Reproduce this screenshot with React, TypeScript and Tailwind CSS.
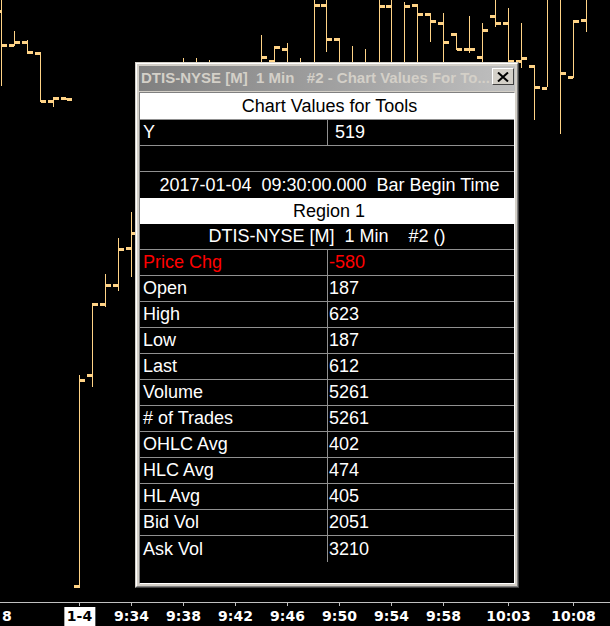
import React from 'react';

type Bar = { x: number; hi: number; lo: number; o?: number; c?: number };

// price bars (pixel coords on the chart canvas)
const bars: Bar[] = [
  { x: 1, hi: -5, lo: 86, o: 11, c: 45 },
  { x: 14, hi: 31, lo: 46, o: 45, c: 42 },
  { x: 27, hi: 40, lo: 54, o: 42, c: 52 },
  { x: 40, hi: 52, lo: 102, o: 53, c: 101 },
  { x: 53, hi: 97, lo: 107, o: 101, c: 98 },
  { x: 66, hi: 98, lo: 100, o: 98, c: 99 },
  { x: 79, hi: 375, lo: 588, o: 586, c: 380 },
  { x: 92, hi: 303, lo: 387, o: 375, c: 304 },
  { x: 105, hi: 274, lo: 307, o: 304, c: 285 },
  { x: 118, hi: 238, lo: 291, o: 285, c: 249 },
  { x: 131, hi: 212, lo: 277, o: 248, c: 233 },
  { x: 183, hi: 58, lo: 200 },
  { x: 196, hi: 58, lo: 200 },
  { x: 209, hi: 60, lo: 200 },
  { x: 261, hi: 35, lo: 200, c: 57 },
  { x: 274, hi: 46, lo: 200, o: 61, c: 47 },
  { x: 287, hi: 43, lo: 200, o: 49 },
  { x: 300, hi: 58, lo: 200 },
  { x: 314, hi: -5, lo: 200, c: 5 },
  { x: 326, hi: -5, lo: 52, o: 5, c: 39 },
  { x: 339, hi: 38, lo: 200, o: 39 },
  { x: 352, hi: 46, lo: 200 },
  { x: 365, hi: 49, lo: 200 },
  { x: 379, hi: -5, lo: 200, c: 6 },
  { x: 391, hi: -5, lo: 200, o: 6 },
  { x: 404, hi: 2, lo: 200, c: 6 },
  { x: 417, hi: 4, lo: 200, o: 5, c: 14 },
  { x: 430, hi: 13, lo: 42, o: 14, c: 21 },
  { x: 443, hi: 13, lo: 200, o: 23, c: 42 },
  { x: 456, hi: 33, lo: 50, o: 34, c: 49 },
  { x: 469, hi: 16, lo: 53, o: 49, c: 49 },
  { x: 482, hi: 23, lo: 200, o: 57, c: 30 },
  { x: 495, hi: -5, lo: 27, o: 16, c: 23 },
  { x: 508, hi: 8, lo: 200, o: 23, c: 61 },
  { x: 521, hi: 23, lo: 68, o: 61, c: 58 },
  { x: 534, hi: 65, lo: 120, o: 66, c: 87 },
  { x: 547, hi: -5, lo: 87, o: 88 },
  { x: 560, hi: -5, lo: 134, c: 73 },
  { x: 573, hi: 20, lo: 78, o: 77, c: 21 },
  { x: 586, hi: -5, lo: 32, o: 20 },
];

const ticks = [
  { x: 79, t: '1-4', day: true },
  { x: 131, t: '9:34' },
  { x: 183, t: '9:38' },
  { x: 235, t: '9:42' },
  { x: 287, t: '9:46' },
  { x: 339, t: '9:50' },
  { x: 391, t: '9:54' },
  { x: 443, t: '9:58' },
  { x: 508, t: '10:03' },
  { x: 573, t: '10:08' },
];

const values: [string, string, boolean?][] = [
  ['Price Chg', '-580', true],
  ['Open', '187'],
  ['High', '623'],
  ['Low', '187'],
  ['Last', '612'],
  ['Volume', '5261'],
  ['# of Trades', '5261'],
  ['OHLC Avg', '402'],
  ['HLC Avg', '474'],
  ['HL Avg', '405'],
  ['Bid Vol', '2051'],
  ['Ask Vol', '3210'],
];

const BAR = '#ffd386';

const Chart = () => (
  <svg className="absolute inset-0" width={610} height={602}>
    {bars.map((b) => (
      <g key={b.x} fill={BAR}>
        <rect x={b.x} y={b.hi} width={1} height={b.lo - b.hi} />
        {b.o !== undefined && <rect x={b.x - 5} y={b.o - 1} width={5} height={3} />}
        {b.c !== undefined && <rect x={b.x + 1} y={b.c - 1} width={5} height={3} />}
      </g>
    ))}
  </svg>
);

const Row = ({ label, value, red, last, wide }: { label: string; value: string; red?: boolean; last?: boolean; wide?: boolean }) => (
  <div className={`flex h-[26px] ${last ? '' : 'border-b border-[#909090]'} ${red ? 'text-[#ff0000]' : 'text-white'}`}>
    <div className="w-[188px] border-r border-[#909090] pl-[3px] flex items-center">{label}</div>
    <div className={`flex-1 flex items-center ${wide ? 'pl-[7px]' : 'pl-[1px]'}`}>{value}</div>
  </div>
);

const ValuesWindow = () => (
  <div className="absolute left-[135px] top-[62px] w-[384px] h-[526px] border border-t-[#d4d0c8] border-l-[#d4d0c8] border-r-[#404040] border-b-[#404040] bg-[#d4d0c8]">
    <div className="h-full flex flex-col border border-t-white border-l-white border-r-[#808080] border-b-[#808080] p-[2px]">
      {/* title bar */}
      <div className="h-[25px] flex items-start bg-gradient-to-r from-[#808080] to-[#c0c0c0]">
        <div className="flex-1 h-full flex items-center pl-[2px] text-[15px] font-bold text-[#d4d0c8] whitespace-pre font-['Liberation_Sans',Arial,sans-serif] overflow-hidden">
          DTIS-NYSE [M]  1 Min   #2 - Chart Values For To...
        </div>
        <div className="mt-[2px] mr-[1px] w-[22px] h-[17px] bg-[#d4d0c8] border border-t-white border-l-white border-r-[#404040] border-b-[#404040] flex items-center justify-center">
          <svg width="12" height="10" viewBox="0 0 12 10">
            <path d="M1 0.5 L11 9.5 M11 0.5 L1 9.5" stroke="#000" strokeWidth="2" />
          </svg>
        </div>
      </div>

      {/* values table */}
      <div className="mt-[1px] flex-1 flex flex-col bg-black border border-t-[#808080] border-l-[#808080] border-r-white border-b-white text-[18px] font-['Liberation_Sans',Arial,sans-serif] whitespace-pre">
        <div className="h-[27px] bg-white text-black flex items-center justify-center border-b border-[#909090] pl-[5px]">
          Chart Values for Tools
        </div>
        <Row label="Y" value="519" wide />
        <div className="h-[26px] border-b border-[#909090]" />
        <div className="h-[26px] text-white flex items-center justify-center pl-[5px]">
          2017-01-04  09:30:00.000  Bar Begin Time
        </div>
        <div className="h-[26px] bg-white text-black flex items-center justify-center pl-[4px]">Region 1</div>
        <div className="h-[26px] text-white flex items-center justify-center border-b border-[#909090]">
          DTIS-NYSE [M]  1 Min    #2 ()
        </div>
        {values.map(([l, v, red], i) => (
          <Row key={l} label={l} value={v} red={red} last={i === values.length - 1} />
        ))}
      </div>
    </div>
  </div>
);

const TimeAxis = () => (
  <div className="relative flex-1 border-t border-[#c0c0c0] font-['DejaVu_Sans',Verdana,sans-serif] text-[14px] font-bold">
    <span className="absolute left-[2px] top-[4px] h-[19px] leading-[19px] text-white">8</span>
    {ticks.map((t) => (
      <React.Fragment key={t.t}>
        <div className="absolute top-0 w-px h-[3px] bg-[#c0c0c0]" style={{ left: t.x }} />
        <span
          className={`absolute top-[4px] h-[19px] leading-[19px] px-[3px] -translate-x-1/2 ${t.day ? 'bg-white text-black' : 'text-white'}`}
          style={{ left: t.x + 0.5 }}
        >
          {t.t}
        </span>
      </React.Fragment>
    ))}
  </div>
);

export default function App() {
  return (
    <div className="w-[610px] h-[626px] bg-black overflow-hidden flex flex-col">
      <div className="relative h-[602px]">
        <Chart />
        <ValuesWindow />
      </div>
      <TimeAxis />
    </div>
  );
}
